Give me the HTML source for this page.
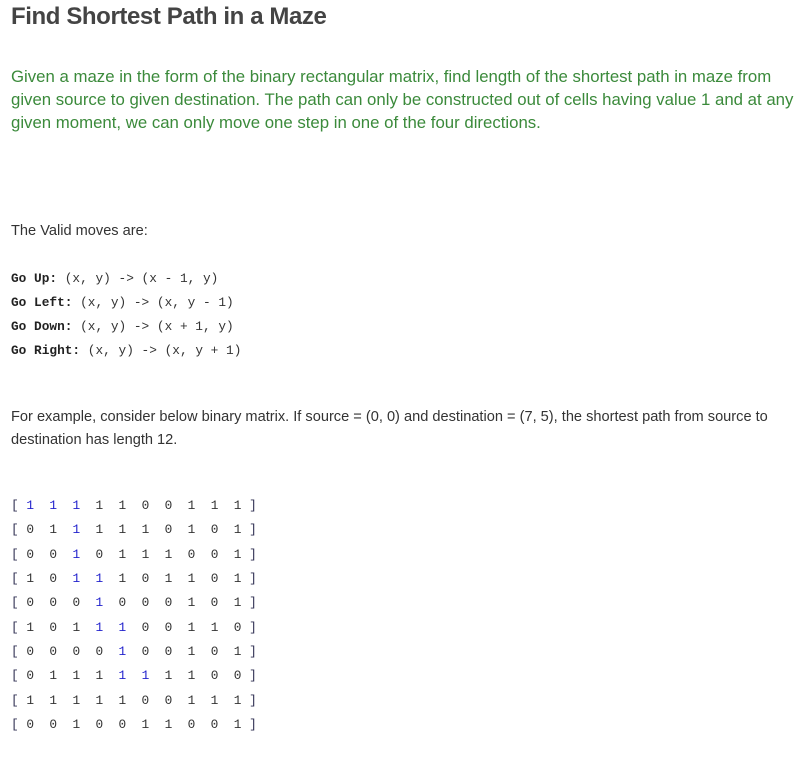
<!DOCTYPE html>
<html><head><meta charset="utf-8"><style>
body{margin:0;background:#fff;width:801px;height:757px;position:relative;overflow:hidden;font-family:"Liberation Sans",sans-serif}
.a{position:absolute;left:11px;white-space:nowrap}
h1{position:absolute;left:11px;top:3px;margin:0;font-size:24px;font-weight:bold;color:#444;letter-spacing:-0.4px}
.g{color:#3b8a3b;font-size:16.8px;line-height:23px}
.t{color:#333;font-size:14.6px;line-height:23px}
.c{font-family:"Liberation Mono",monospace;font-size:12.8px;color:#333;line-height:24px}
.c b{color:#222}
.m{position:absolute;left:11px;top:494px;font-family:"Liberation Mono",monospace;font-size:12.8px;line-height:24.35px;color:#333;white-space:pre}
.m i{font-style:normal;color:#333355}
.m u{text-decoration:none;color:#2222cc}
</style></head><body>
<h1>Find Shortest Path in a Maze</h1>
<div class="a g" style="top:65px">Given a maze in the form of the binary rectangular matrix, find length of the shortest path in maze from<br>given source to given destination. The path can only be constructed out of cells having value 1 and at any<br>given moment, we can only move one step in one of the four directions.</div>
<div class="a t" style="top:220px">The Valid moves are:</div>
<div class="a c" style="top:267px"><b>Go Up:</b> (x, y) -&gt; (x - 1, y)<br><b>Go Left:</b> (x, y) -&gt; (x, y - 1)<br><b>Go Down:</b> (x, y) -&gt; (x + 1, y)<br><b>Go Right:</b> (x, y) -&gt; (x, y + 1)</div>
<div class="a t" style="top:406px">For example, consider below binary matrix. If source = (0, 0) and destination = (7, 5), the shortest path from source to<br>destination has length 12.</div>
<div class="m"><i>[</i> <u>1</u>  <u>1</u>  <u>1</u>  1  1  0  0  1  1  1 <i>]</i>
<i>[</i> 0  1  <u>1</u>  1  1  1  0  1  0  1 <i>]</i>
<i>[</i> 0  0  <u>1</u>  0  1  1  1  0  0  1 <i>]</i>
<i>[</i> 1  0  <u>1</u>  <u>1</u>  1  0  1  1  0  1 <i>]</i>
<i>[</i> 0  0  0  <u>1</u>  0  0  0  1  0  1 <i>]</i>
<i>[</i> 1  0  1  <u>1</u>  <u>1</u>  0  0  1  1  0 <i>]</i>
<i>[</i> 0  0  0  0  <u>1</u>  0  0  1  0  1 <i>]</i>
<i>[</i> 0  1  1  1  <u>1</u>  <u>1</u>  1  1  0  0 <i>]</i>
<i>[</i> 1  1  1  1  1  0  0  1  1  1 <i>]</i>
<i>[</i> 0  0  1  0  0  1  1  0  0  1 <i>]</i></div>
</body></html>
